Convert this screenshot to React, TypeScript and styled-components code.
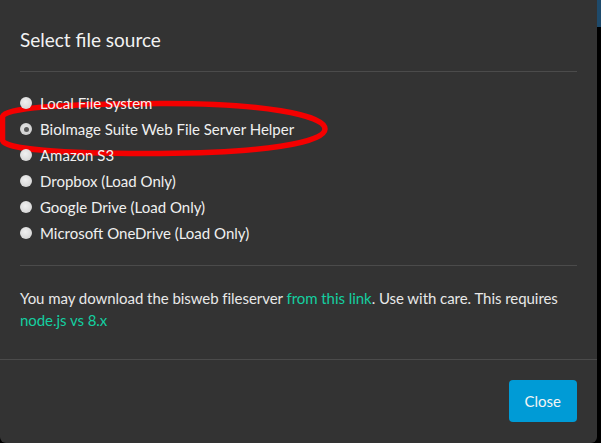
import React from "react";
import styled, { createGlobalStyle } from "styled-components";

const Global = createGlobalStyle`
  html, body { margin: 0; padding: 0; background: #000; }
  body { width: 601px; height: 443px; overflow: hidden; font-family: Lato, "Open Sans", sans-serif; }
  * { box-sizing: border-box; }
`;

const Page = styled.div`
  display: flex;
  width: 601px;
  height: 443px;
  background: #000;
`;

const SideColumn = styled.div`
  flex: 1;
  display: flex;
  flex-direction: column;
`;

const NavStrip = styled.div`
  height: 27px;
  background: #1e4a6b;
`;

const Modal = styled.div`
  position: relative;
  width: 597px;
  height: 443px;
  background: #333333;
  border-radius: 0 0 6px 6px;
  display: flex;
  flex-direction: column;
  color: #e8e8e8;
`;

const Header = styled.div`
  margin: 0 20px;
  padding: 30px 0 21px;
  border-bottom: 1px solid #4b4b4b;
  position: relative;
  z-index: 1;
`;

const Title = styled.h4`
  margin: 0;
  font-size: 19px;
  line-height: 20px;
  font-weight: 400;
  color: #f2f2f2;
`;

const SourceList = styled.div`
  margin: 0 20px;
  padding: 18px 0 19px;
  border-bottom: 1px solid #4b4b4b;
  display: flex;
  flex-direction: column;
  position: relative;
  z-index: 1;
`;

const Option = styled.label`
  display: flex;
  align-items: center;
  gap: 8px;
  height: 26px;
  font-size: 15px;
  color: #f0f0f0;
`;

const Radio = styled.input`
  appearance: none;
  margin: 0;
  width: 12px;
  height: 12px;
  border-radius: 50%;
  background: radial-gradient(circle at 45% 40%, #f0f0f0 0%, #dcdcdc 60%, #c8c8c8 100%);
  display: grid;
  place-items: center;
  &:checked::after {
    content: "";
    width: 5px;
    height: 5px;
    border-radius: 50%;
    background: #5a5a5a;
  }
  &:checked {
    background: radial-gradient(circle at 45% 40%, #e4e4e4 0%, #cfcfcf 70%, #bdbdbd 100%);
  }
`;

const Note = styled.p`
  margin: 0;
  padding: 21px 20px 28px;
  font-size: 15px;
  line-height: 22px;
  letter-spacing: -0.05px;
  color: #e8e8e8;
`;

const Link = styled.a`
  color: #14cfa0;
  text-decoration: none;
`;

const Footer = styled.div`
  border-top: 1px solid #4b4b4b;
  padding: 20px 20px 21px;
  display: flex;
  justify-content: flex-end;
`;

const Button = styled.button`
  height: 42px;
  padding: 0 16px;
  border: none;
  border-radius: 4px;
  background: #009bd6;
  color: #f4f4f4;
  font-family: Lato, "Open Sans", sans-serif;
  font-size: 15px;
`;

const Annotation = styled.svg`
  position: absolute;
  left: 0;
  top: 0;
  z-index: 0;
  pointer-events: none;
`;

const sources = [
  "Local File System",
  "BioImage Suite Web File Server Helper",
  "Amazon S3",
  "Dropbox (Load Only)",
  "Google Drive (Load Only)",
  "Microsoft OneDrive (Load Only)",
];

export default function App() {
  return (
    <>
      <Global />
      <Page>
        <Modal>
          <Annotation width="340" height="170" viewBox="0 0 340 170">
            <path
              d="M 2.5 117 C 2.5 108, 60 104, 160 103.5 C 262 103, 325 115, 325 129 C 325 143, 262 153, 160 153.5 C 60 154, 2.5 149, 2.5 140 Z"
              fill="none"
              stroke="#f40000"
              strokeWidth="5.5"
            />
          </Annotation>
          <Header>
            <Title>Select file source</Title>
          </Header>
          <SourceList>
            {sources.map((s, i) => (
              <Option key={s}>
                <Radio type="radio" name="source" defaultChecked={i === 1} />
                {s}
              </Option>
            ))}
          </SourceList>
          <Note>
            You may download the bisweb fileserver <Link href="#">from this link</Link>. Use with care. This requires{" "}
            <Link href="#">node.js vs 8.x</Link>
          </Note>
          <Footer>
            <Button>Close</Button>
          </Footer>
        </Modal>
        <SideColumn>
          <NavStrip />
        </SideColumn>
      </Page>
    </>
  );
}
